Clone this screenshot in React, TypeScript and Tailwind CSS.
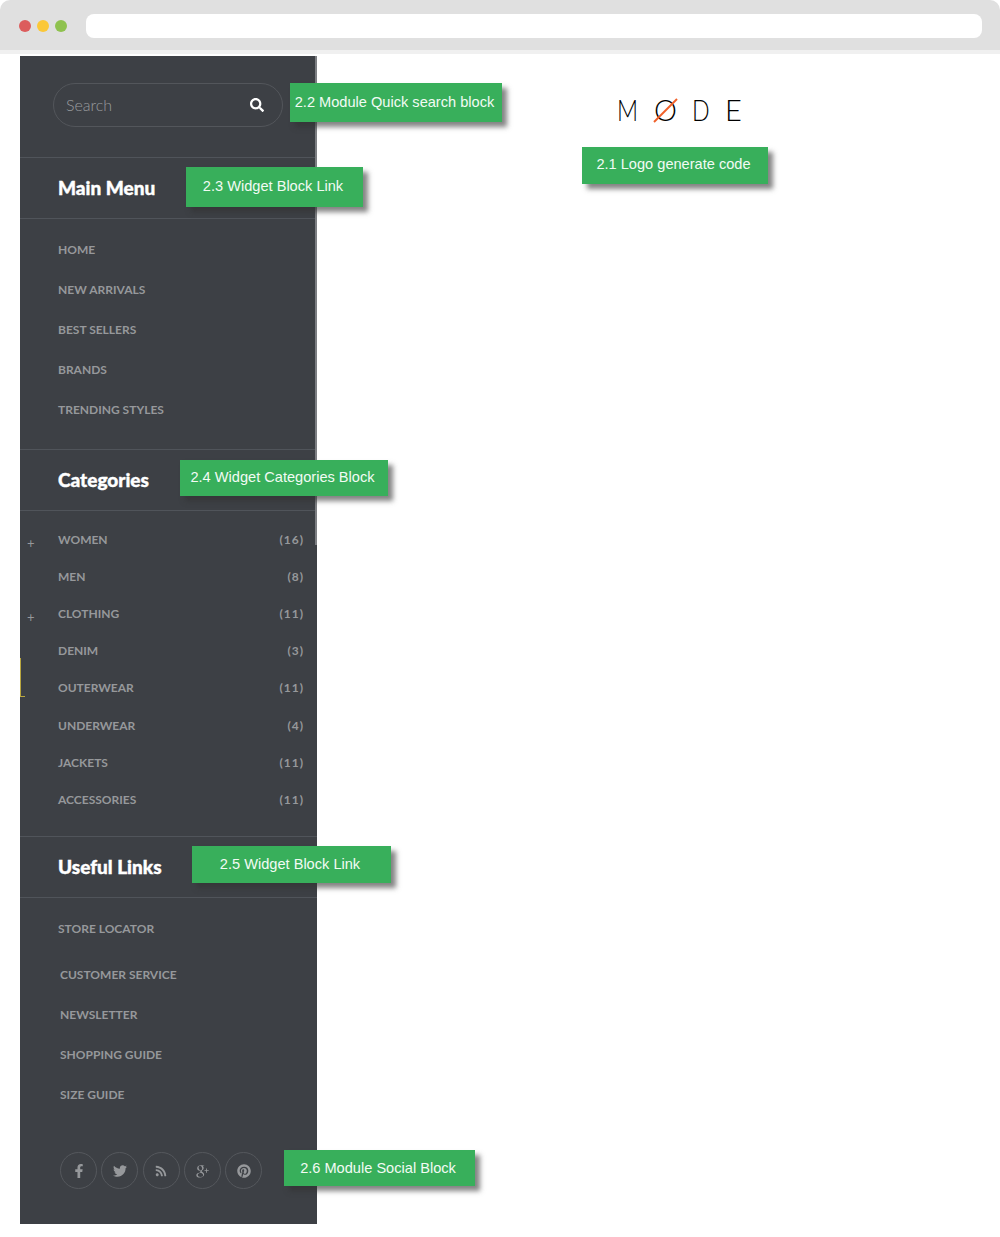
import { FaFacebookF, FaPinterest, FaRss, FaSearch, FaTwitter } from "react-icons/fa";
import { TiSocialGooglePlus } from "react-icons/ti";

const mainMenu = ["HOME", "NEW ARRIVALS", "BEST SELLERS", "BRANDS", "TRENDING STYLES"];
const categories = [
  { name: "WOMEN", count: 16, plus: true },
  { name: "MEN", count: 8 },
  { name: "CLOTHING", count: 11, plus: true },
  { name: "DENIM", count: 3 },
  { name: "OUTERWEAR", count: 11 },
  { name: "UNDERWEAR", count: 4 },
  { name: "JACKETS", count: 11 },
  { name: "ACCESSORIES", count: 11 },
];
const usefulLinks = ["CUSTOMER SERVICE", "NEWSLETTER", "SHOPPING GUIDE", "SIZE GUIDE"];
const socials = [
  { Icon: FaFacebookF, size: "size-[14px]" },
  { Icon: FaTwitter, size: "size-[14px]" },
  { Icon: FaRss, size: "size-[12px]" },
  { Icon: TiSocialGooglePlus, size: "size-[20px]" },
  { Icon: FaPinterest, size: "size-[14px]" },
];

function Tag({ className, children }: { className: string; children: string }) {
  return (
    <div
      className={`absolute z-10 flex items-center justify-center bg-[#38af5b] pr-[3px] font-['Liberation_Sans',sans-serif] text-[14.6px] whitespace-nowrap text-[#f2fbf4] shadow-[5px_5px_5px_rgba(50,50,50,0.6)] ${className}`}
    >
      {children}
    </div>
  );
}

function SectionTitle({ children }: { children: string }) {
  return (
    <div className="flex h-[62px] items-center border-y border-[#50545a] pl-[38px] text-[19px] font-black text-white [-webkit-text-stroke:0.4px_white]">
      {children}
    </div>
  );
}

function MenuLink({ children }: { children: string }) {
  return <div className="flex h-10 items-center text-[12px] font-bold text-[#96989b]">{children}</div>;
}

export default function App() {
  return (
    <div className="relative h-[1237px] w-[1000px] overflow-hidden bg-white font-['Lato',sans-serif]">
      {/* Browser chrome */}
      <div className="h-[54px] border-b-[4px] border-[#f0f0f0]">
        <div className="flex h-full items-center rounded-t-[10px] bg-[#e0e0e0] pt-[2px] pl-[19px]">
          <div className="flex gap-[6px]">
            <span className="size-3 rounded-full bg-[#dc5c5c]" />
            <span className="size-3 rounded-full bg-[#fbc838]" />
            <span className="size-3 rounded-full bg-[#8fc24f]" />
          </div>
          <div className="ml-[19px] h-6 w-[896px] rounded-lg bg-white" />
        </div>
      </div>

      {/* Sidebar */}
      <div className="relative mt-[2px] ml-5 h-[1168px] w-[297px] bg-[#3d4045]">
        <div className="absolute top-0 right-0 h-[489px] w-[2px] bg-[#7d7f83]" />
        <div className="absolute top-[602px] left-0 h-[39px] w-[5px] border-b border-l border-[#b9a640]" />

        <div className="flex h-[101px] items-start pt-[27px] pl-[33px]">
          <div className="flex h-11 w-[230px] items-center justify-between rounded-full border border-[#53565b] pr-[18px] pl-3">
            <span className="text-[16px] font-light text-[#9a9c9f]">Search</span>
            <FaSearch className="size-[14px] text-white" />
          </div>
        </div>

        <SectionTitle>Main Menu</SectionTitle>
        <div className="h-[230px] pt-[11px] pl-[38px]">
          {mainMenu.map((item) => (
            <MenuLink key={item}>{item}</MenuLink>
          ))}
        </div>

        <SectionTitle>Categories</SectionTitle>
        <div className="h-[325px] pt-[10px]">
          {categories.map((c) => (
            <div key={c.name} className="relative flex h-[37.2px] items-center justify-between pr-[13px] pl-[38px] text-[12px] font-bold text-[#96989b]">
              {c.plus && <span className="absolute top-[16px] left-[7px] text-[13px] leading-none font-normal">+</span>}
              <span>{c.name}</span>
              <span className="tracking-[1px]">({c.count})</span>
            </div>
          ))}
        </div>

        <SectionTitle>Useful Links</SectionTitle>
        <div className="pt-[11px] pl-[38px]">
          <MenuLink>STORE LOCATOR</MenuLink>
        </div>
        <div className="pt-[6px] pl-10">
          {usefulLinks.map((item) => (
            <MenuLink key={item}>{item}</MenuLink>
          ))}
        </div>

        <div className="mt-[37px] flex gap-[4.25px] pl-10">
          {socials.map(({ Icon, size }, i) => (
            <div key={i} className="flex size-[37px] items-center justify-center rounded-full border border-[#55585d] text-[#96989b]">
              <Icon className={size} />
            </div>
          ))}
        </div>
      </div>

      {/* Logo */}
      <div className="absolute top-[92px] left-[617px] flex h-9 items-center text-[29px] font-light text-black">
        <span className="inline-block w-[37px] origin-left scale-x-[0.8]">M</span>
        <span className="relative w-[38px]">
          O
          <svg className="absolute top-[8px] left-[-1px]" width="28" height="28" viewBox="0 0 28 28">
            <path d="M1 26L24 3" stroke="#f0602a" strokeWidth="2" />
          </svg>
        </span>
        <span className="inline-block w-[33px] origin-left scale-x-[0.8]">D</span>
        <span>E</span>
      </div>

      <Tag className="top-[83px] left-[290px] h-[39px] w-[212px] pt-px">2.2 Module Quick search block</Tag>
      <Tag className="top-[147px] left-[582px] h-[37px] w-[186px] pb-[2px]">2.1 Logo generate code</Tag>
      <Tag className="top-[167px] left-[186px] h-[40px] w-[177px]">2.3 Widget Block Link</Tag>
      <Tag className="top-[460px] left-[180px] h-[36px] w-[208px]">2.4 Widget Categories Block</Tag>
      <Tag className="top-[846px] left-[192px] h-[37px] w-[199px]">2.5 Widget Block Link</Tag>
      <Tag className="top-[1150px] left-[284px] h-9 w-[191px] pt-px">2.6 Module Social Block</Tag>
    </div>
  );
}
